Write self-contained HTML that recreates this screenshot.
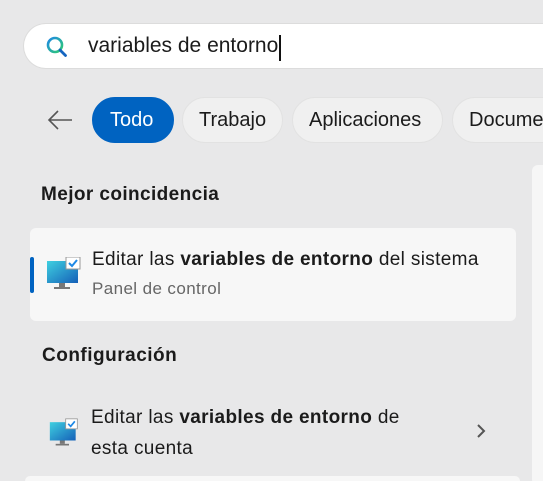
<!DOCTYPE html>
<html><head><meta charset="utf-8"><style>
*{margin:0;padding:0;box-sizing:border-box}
html,body{width:543px;height:481px;overflow:hidden}
body{background:#e8e8e9;font-family:"Liberation Sans",sans-serif;position:relative;color:#1b1b1b}
#w{position:absolute;left:0;top:0;width:543px;height:481px;overflow:hidden}
.a{position:absolute;white-space:nowrap}
.search{left:23px;top:23px;width:540px;height:46px;background:#fff;border-radius:23px 0 0 23px;border:1px solid #dcdcdc;border-right:none}
.chip{top:97px;height:46px;border-radius:23px;background:#f0f0f0;border:1px solid #e2e2e2;font-size:20px;line-height:44px;padding:0 16px}
.t{font-size:19px;letter-spacing:0.35px}
</style></head><body><div id="w">
<div class="a search"></div>
<svg class="a" style="left:45px;top:35px" width="24" height="24" viewBox="0 0 24 24"><defs><linearGradient id="g" x1="0" y1="0" x2="1" y2="1"><stop offset="0" stop-color="#1e88e5"/><stop offset="1" stop-color="#2ecc71"/></linearGradient><linearGradient id="m" x1="0" y1="0" x2="1" y2="1"><stop offset="0" stop-color="#3fd0e0"/><stop offset="1" stop-color="#1560b8"/></linearGradient></defs><circle cx="10" cy="10" r="7" fill="none" stroke="url(#g)" stroke-width="2.6"/><path d="M15 15l5.5 5.5" stroke="#1565c0" stroke-width="2.8" stroke-linecap="round"/></svg>
<div class="a" style="left:88px;top:34px;font-size:21px">variables de entorno</div>
<div class="a" style="left:279px;top:35px;width:2px;height:26px;background:#111"></div>
<svg class="a" style="left:46px;top:108px" width="28" height="24" viewBox="0 0 28 24"><path d="M26 12H3M12 3L3 12l9 9" fill="none" stroke="#555" stroke-width="1.6"/></svg>
<div class="a chip" style="left:92px;width:82px;background:#0063c1;border-color:#0063c1;color:#fff;padding-left:17px">Todo</div>
<div class="a chip" style="left:182px;width:101px">Trabajo</div>
<div class="a chip" style="left:292px;width:151px">Aplicaciones</div>
<div class="a chip" style="left:452px;width:140px">Documentos</div>
<div class="a" style="left:532px;top:165px;width:20px;height:320px;background:#f6f6f6;border-radius:6px"></div>
<div class="a" style="left:41px;top:184px;font-weight:bold;font-size:19px;letter-spacing:0.4px">Mejor coincidencia</div>
<div class="a" style="left:30px;top:228px;width:486px;height:93px;background:#f7f7f7;border-radius:6px"></div>
<div class="a" style="left:30px;top:257px;width:4px;height:36px;background:#0063c1;border-radius:2px"></div>
<svg class="a" style="left:46px;top:257px" width="36" height="34" viewBox="0 0 36 34"><rect x="1" y="4" width="31" height="22" fill="url(#m)"/><rect x="13" y="26" width="6" height="4" fill="#777"/><rect x="8" y="30" width="16" height="2" fill="#777"/><rect x="20" y="0" width="14" height="12" fill="#fff" stroke="#999"/><path d="M23 6l3 3 5-6" stroke="#1e88e5" stroke-width="2" fill="none"/></svg>
<div class="a t" style="left:92px;top:249px">Editar las <b>variables de entorno</b> del sistema</div>
<div class="a" style="left:92px;top:279px;font-size:17px;letter-spacing:0.4px;color:#666">Panel de control</div>
<div class="a" style="left:42px;top:345px;font-weight:bold;font-size:19px;letter-spacing:0.5px">Configuración</div>
<svg class="a" style="left:49px;top:418px" width="30" height="30" viewBox="0 0 36 34"><rect x="1" y="4" width="31" height="22" fill="url(#m)"/><rect x="13" y="26" width="6" height="4" fill="#777"/><rect x="8" y="30" width="16" height="2" fill="#777"/><rect x="20" y="0" width="14" height="12" fill="#fff" stroke="#999"/><path d="M23 6l3 3 5-6" stroke="#1e88e5" stroke-width="2" fill="none"/></svg>
<div class="a t" style="left:91px;top:402px;line-height:31px">Editar las <b>variables de entorno</b> de<br>esta cuenta</div>
<svg class="a" style="left:475px;top:423px" width="12" height="16" viewBox="0 0 12 16"><path d="M3 2l6 6-6 6" fill="none" stroke="#555" stroke-width="2"/></svg>
<div class="a" style="left:25px;top:476px;width:495px;height:5px;background:#f7f7f7;border-radius:6px 6px 0 0"></div>
</div></body></html>
